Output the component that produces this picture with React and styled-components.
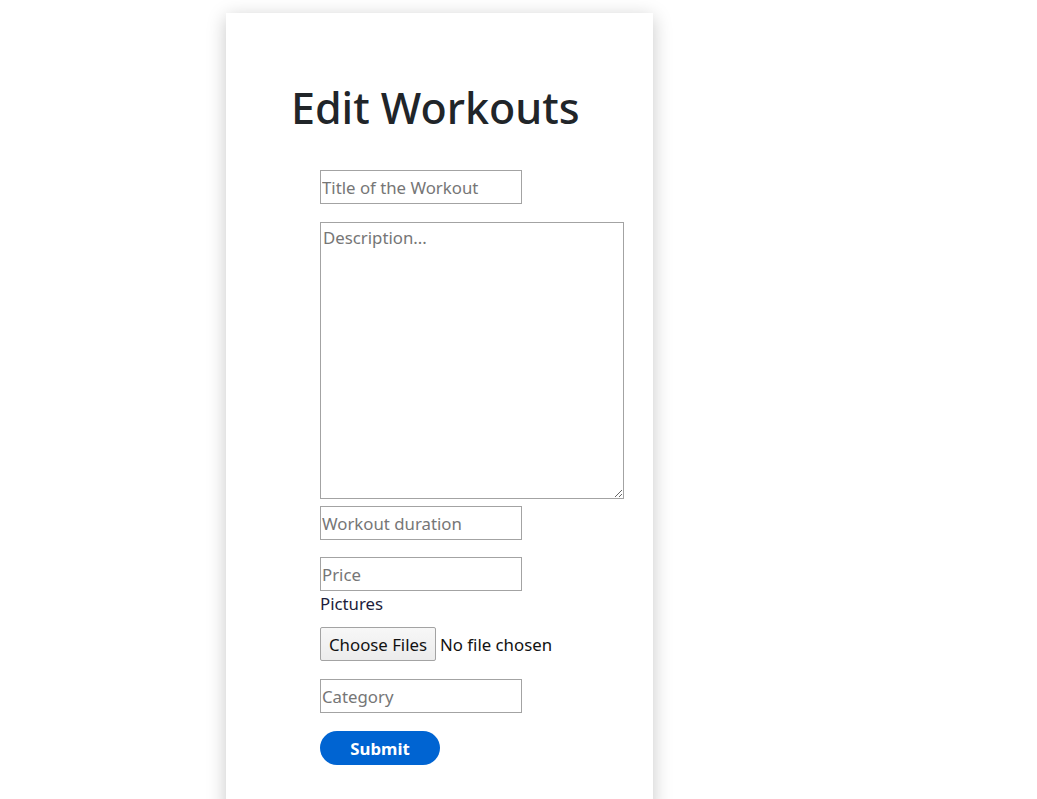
import React from "react";
import styled, { createGlobalStyle } from "styled-components";

const GlobalStyle = createGlobalStyle`
  body {
    margin: 0;
    background: #ffffff;
    font-family: "Noto Sans", "Open Sans", sans-serif;
  }
`;

export default function App() {
  return (
    <>
      <GlobalStyle />
      <Page>
        <Card>
          <Heading>Edit Workouts</Heading>
          <Form onSubmit={(e) => e.preventDefault()}>
            <TextInput type="text" placeholder="Title of the Workout" />
            <Description placeholder="Description..." />
            <TextInput type="text" placeholder="Workout duration" $gap={17} />
            <TextInput type="text" placeholder="Price" $gap={0} />
            <Label htmlFor="pictures">Pictures</Label>
            <FileRow>
              <FileButton type="button">Choose Files</FileButton>
              <FileStatus>No file chosen</FileStatus>
            </FileRow>
            <TextInput type="text" placeholder="Category" />
            <SubmitButton type="submit">Submit</SubmitButton>
          </Form>
        </Card>
      </Page>
    </>
  );
}

const Page = styled.div`
  padding: 13px 0 0 226px;
  height: 786px;
  overflow: hidden;
`;

const Card = styled.div`
  width: 427px;
  min-height: 800px;
  background: #ffffff;
  box-shadow: 0 4px 18px rgba(0, 0, 0, 0.22);
`;

const Heading = styled.h1`
  margin: 0;
  padding: 66px 0 0 65px;
  font-size: 43px;
  font-weight: 500;
  line-height: 58px;
  color: #212529;
`;

const Form = styled.form`
  display: flex;
  flex-direction: column;
  align-items: flex-start;
  padding: 33px 0 0 94px;
`;

const TextInput = styled.input`
  box-sizing: border-box;
  width: 202px;
  height: 34px;
  margin: 0 0 ${(p) => (p.$gap ?? 18) + "px"} 0;
  padding: 0 1px;
  border: 1px solid #a3a3a3;
  border-radius: 0;
  font-family: inherit;
  font-size: 16.8px;
  color: #222;
  outline: none;

  &::placeholder {
    color: #767676;
  }
`;

const Description = styled.textarea`
  box-sizing: border-box;
  width: 304px;
  height: 277px;
  margin: 0 0 7px 0;
  padding: 4px 2px;
  border: 1px solid #a3a3a3;
  border-radius: 0;
  font-family: inherit;
  font-size: 16.8px;
  line-height: 22px;
  resize: both;
  outline: none;

  &::placeholder {
    color: #767676;
  }
`;

const Label = styled.label`
  font-size: 16.8px;
  line-height: 26px;
  color: #1c1c3c;
  margin-bottom: 10px;
`;

const FileRow = styled.div`
  display: flex;
  align-items: center;
  gap: 4px;
  margin-bottom: 18px;
`;

const FileButton = styled.button`
  box-sizing: border-box;
  height: 34px;
  padding: 0 8px;
  border: 1px solid #a3a3a3;
  border-radius: 2px;
  background: linear-gradient(#f7f7f7, #ececec);
  font-family: inherit;
  font-size: 16.8px;
  color: #111;
`;

const FileStatus = styled.span`
  font-size: 16.8px;
  color: #111;
`;

const SubmitButton = styled.button`
  box-sizing: border-box;
  width: 120px;
  height: 34px;
  border: none;
  border-radius: 17px;
  background: #0064d2;
  color: #ffffff;
  font-family: inherit;
  font-size: 16.8px;
  font-weight: 700;
`;
